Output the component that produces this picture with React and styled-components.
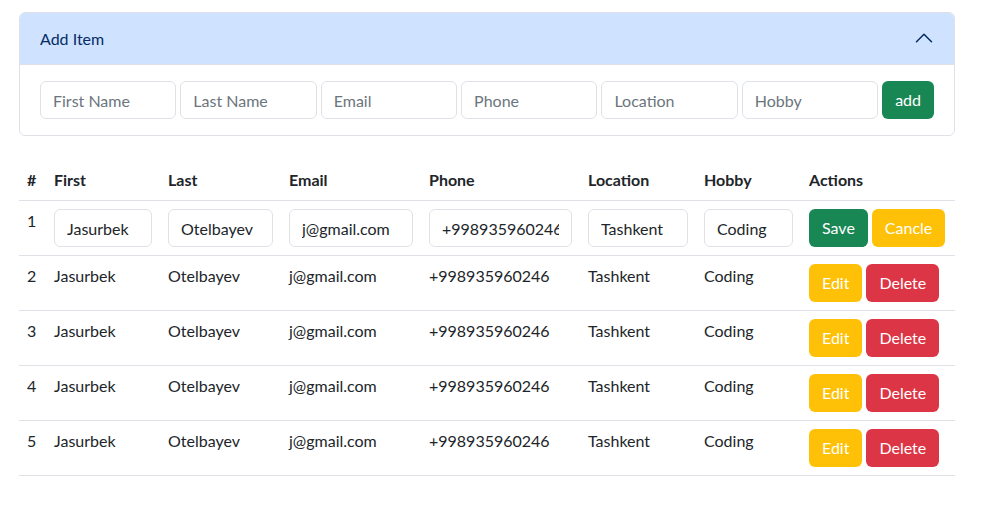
import styled, { createGlobalStyle } from 'styled-components'

const GlobalStyle = createGlobalStyle`
  body {
    margin: 0;
    font-family: 'Lato', 'Noto Sans', sans-serif;
    font-size: 16px;
    line-height: 24px;
    color: #212529;
    background: #fff;
  }
  * { box-sizing: border-box; }
`

const Page = styled.div`
  width: 936px;
  margin: 12px 0 0 19px;
`

const Accordion = styled.div`
  border: 1px solid #dee2e6;
  border-radius: 6px;
  overflow: hidden;
`

const AccordionHeader = styled.button`
  width: 100%;
  height: 52px;
  display: flex;
  align-items: center;
  justify-content: space-between;
  padding: 0 20px 2px 20px;
  border: none;
  background: #cfe2ff;
  color: #052c65;
  font-family: inherit;
  font-size: 16px;
  box-shadow: inset 0 -1px 0 #dee2e6;
  cursor: pointer;
`

const AccordionBody = styled.div`
  display: flex;
  gap: 4px;
  padding: 16px 20px;
`

const Input = styled.input`
  flex: ${p => (p.$fill ? '1' : 'none')};
  width: ${p => (p.$fill ? '0' : '100%')};
  min-width: 0;
  height: 38px;
  padding: 6px 12px;
  border: 1px solid #dee2e6;
  border-radius: 6px;
  font-family: inherit;
  font-size: 16px;
  line-height: 24px;
  color: #212529;
  background: #fff;
  outline: none;

  &::placeholder {
    color: #6c757d;
  }
`

const Button = styled.button`
  height: 38px;
  padding: 6px 13px;
  border: none;
  border-radius: 6px;
  font-family: inherit;
  font-size: 16px;
  line-height: 24px;
  color: #fff;
  background: ${p => p.$bg};
  cursor: pointer;
`

const Table = styled.table`
  width: 100%;
  margin-top: 24px;
  border-collapse: collapse;
  table-layout: fixed;

  th, td {
    padding: 8px;
    border-bottom: 1px solid #dee2e6;
    text-align: left;
    vertical-align: top;
  }
  th {
    font-weight: 700;
  }
`

const Actions = styled.div`
  display: flex;
  gap: 4px;
`

const cols = [27, 114, 121, 140, 159, 116, 105, 154]
const fields = ['First Name', 'Last Name', 'Email', 'Phone', 'Location', 'Hobby']
const rows = [1, 2, 3, 4, 5].map(id => ({
  id,
  first: 'Jasurbek',
  last: 'Otelbayev',
  email: 'j@gmail.com',
  phone: '+998935960246',
  location: 'Tashkent',
  hobby: 'Coding',
}))

const Chevron = () => (
  <svg width="20" height="20" viewBox="0 0 16 16" fill="none" stroke="#052c65" strokeWidth="1.2" strokeLinecap="round" strokeLinejoin="round">
    <path d="M2 11L8 5L14 11" />
  </svg>
)

export default function App() {
  const editing = 1
  return (
    <Page>
      <GlobalStyle />
      <Accordion>
        <AccordionHeader>
          Add Item
          <Chevron />
        </AccordionHeader>
        <AccordionBody>
          {fields.map(f => (
            <Input key={f} $fill placeholder={f} />
          ))}
          <Button $bg="#198754">add</Button>
        </AccordionBody>
      </Accordion>

      <Table>
        <colgroup>
          {cols.map((w, i) => (
            <col key={i} style={{ width: w }} />
          ))}
        </colgroup>
        <thead>
          <tr>
            <th>#</th>
            <th>First</th>
            <th>Last</th>
            <th>Email</th>
            <th>Phone</th>
            <th>Location</th>
            <th>Hobby</th>
            <th>Actions</th>
          </tr>
        </thead>
        <tbody>
          {rows.map(r =>
            r.id === editing ? (
              <tr key={r.id}>
                <td>{r.id}</td>
                <td><Input defaultValue={r.first} /></td>
                <td><Input defaultValue={r.last} /></td>
                <td><Input defaultValue={r.email} /></td>
                <td><Input defaultValue={r.phone} /></td>
                <td><Input defaultValue={r.location} /></td>
                <td><Input defaultValue={r.hobby} /></td>
                <td>
                  <Actions>
                    <Button $bg="#198754">Save</Button>
                    <Button $bg="#ffc107">Cancle</Button>
                  </Actions>
                </td>
              </tr>
            ) : (
              <tr key={r.id}>
                <td>{r.id}</td>
                <td>{r.first}</td>
                <td>{r.last}</td>
                <td>{r.email}</td>
                <td>{r.phone}</td>
                <td>{r.location}</td>
                <td>{r.hobby}</td>
                <td>
                  <Actions>
                    <Button $bg="#ffc107">Edit</Button>
                    <Button $bg="#dc3545">Delete</Button>
                  </Actions>
                </td>
              </tr>
            )
          )}
        </tbody>
      </Table>
    </Page>
  )
}
